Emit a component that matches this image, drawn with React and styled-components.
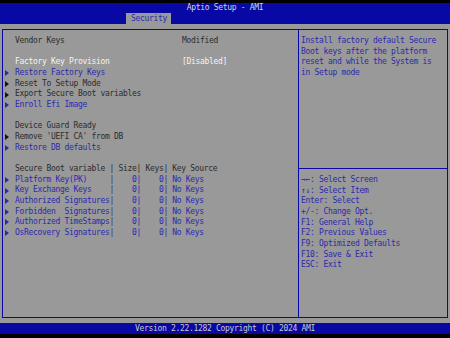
import React from 'react'
import styled, { createGlobalStyle } from 'styled-components'

const blue = '#0808a4'
const gray = '#999999'

const GlobalStyle = createGlobalStyle`
    html, body {
        margin: 0;
        padding: 0;
        background: #000;
    }
    body {
        font-family: "DejaVu Sans Mono", "Liberation Mono", monospace;
    }
`

const ink = {
    dark: '#2c2c2c',
    white: '#f4f4f4',
    blue: '#2a2aae',
}

const rows = [
    { label: 'Vendor Keys', value: 'Modified', tone: 'dark' },
    { blank: true },
    { label: 'Factory Key Provision', value: '[Disabled]', tone: 'white' },
    { label: 'Restore Factory Keys', tone: 'blue', arrow: true },
    { label: 'Reset To Setup Mode', tone: 'dark', arrow: true },
    { label: 'Export Secure Boot variables', tone: 'dark', arrow: true },
    { label: 'Enroll Efi Image', tone: 'blue', arrow: true },
    { blank: true },
    { label: 'Device Guard Ready', tone: 'dark' },
    { label: "Remove 'UEFI CA' from DB", tone: 'dark', arrow: true },
    { label: 'Restore DB defaults', tone: 'blue', arrow: true },
    { blank: true },
    { label: 'Secure Boot variable | Size| Keys| Key Source', tone: 'dark', wide: true },
    { label: 'Platform Key(PK)     |    0|    0| No Keys', tone: 'blue', arrow: true, wide: true },
    { label: 'Key Exchange Keys    |    0|    0| No Keys', tone: 'blue', arrow: true, wide: true },
    { label: 'Authorized Signatures|    0|    0| No Keys', tone: 'blue', arrow: true, wide: true },
    { label: 'Forbidden  Signatures|    0|    0| No Keys', tone: 'blue', arrow: true, wide: true },
    { label: 'Authorized TimeStamps|    0|    0| No Keys', tone: 'blue', arrow: true, wide: true },
    { label: 'OsRecovery Signatures|    0|    0| No Keys', tone: 'blue', arrow: true, wide: true },
]

const helpLines = [
    'Install factory default Secure',
    'Boot keys after the platform',
    'reset and while the System is',
    'in Setup mode',
]

const keyLines = [
    '→←: Select Screen',
    '↑↓: Select Item',
    'Enter: Select',
    '+/-: Change Opt.',
    'F1: General Help',
    'F2: Previous Values',
    'F9: Optimized Defaults',
    'F10: Save & Exit',
    'ESC: Exit',
]

export default function App() {
    return (
        <>
            <GlobalStyle />
            <Screen>
                <TitleBar>
                    <Title>Aptio Setup - AMI</Title>
                    <Tabs>
                        <Tab>Security</Tab>
                    </Tabs>
                </TitleBar>
                <Body>
                    <Frame>
                        <MainPanel>
                            {rows.map((r, i) =>
                                r.blank ? (
                                    <Row key={i} />
                                ) : (
                                    <Row key={i}>
                                        <MarkerSlot>{r.arrow && <Marker tone={r.tone} />}</MarkerSlot>
                                        <Label tone={r.tone} wide={r.wide}>{r.label}</Label>
                                        {r.value && <Value tone={r.tone}>{r.value}</Value>}
                                    </Row>
                                )
                            )}
                        </MainPanel>
                        <SidePanel>
                            <HelpBox>
                                {helpLines.map((l) => (
                                    <Line key={l}>{l}</Line>
                                ))}
                            </HelpBox>
                            <KeyBox>
                                {keyLines.map((l) => (
                                    <Line key={l}>{l}</Line>
                                ))}
                            </KeyBox>
                        </SidePanel>
                    </Frame>
                </Body>
                <Footer>Version 2.22.1282 Copyright (C) 2024 AMI</Footer>
            </Screen>
        </>
    )
}

const Screen = styled.div`
    width: 450px;
    height: 338px;
    box-sizing: border-box;
    padding: 3px 0 4px;
    background: #000;
    display: flex;
    flex-direction: column;
    font-size: 8px;
    letter-spacing: -0.32px;
    overflow: hidden;
`

const TitleBar = styled.div`
    height: 21px;
    background: ${blue};
    display: flex;
    flex-direction: column;
`

const Title = styled.div`
    height: 10px;
    line-height: 10px;
    text-align: center;
    color: #d4d4d4;
`

const Tabs = styled.div`
    margin-top: auto;
    display: flex;
    padding-left: 126px;
`

const Tab = styled.div`
    height: 11px;
    line-height: 11px;
    padding: 0 4px 0 5px;
    background: ${gray};
    color: ${ink.blue};
`

const Body = styled.div`
    flex: 1;
    background: ${gray};
    padding: 5px 2px;
    display: flex;
`

const Frame = styled.div`
    flex: 1;
    border: 1px solid ${blue};
    display: grid;
    grid-template-columns: 296px 1fr;
`

const MainPanel = styled.div`
    border-right: 1px solid ${blue};
    padding-top: 6px;
`

const Row = styled.div`
    height: 10.66px;
    line-height: 10.66px;
    display: flex;
    align-items: center;
    white-space: pre;
`

const MarkerSlot = styled.div`
    width: 10px;
    padding-left: 2px;
    display: flex;
    align-items: center;
`

const Marker = styled.span`
    width: 0;
    height: 0;
    border-left: 4px solid ${({ tone }) => (tone === 'blue' ? ink.blue : '#151515')};
    border-top: 3px solid transparent;
    border-bottom: 3px solid transparent;
`

const Label = styled.span`
    width: ${({ wide }) => (wide ? 'auto' : '167px')};
    color: ${({ tone }) => ink[tone]};
`

const Value = styled.span`
    color: ${({ tone }) => ink[tone]};
`

const SidePanel = styled.div`
    display: flex;
    flex-direction: column;
`

const HelpBox = styled.div`
    height: 132px;
    padding: 6px 0 0 2px;
    border-bottom: 1px solid ${blue};
    color: ${ink.blue};
`

const KeyBox = styled.div`
    padding: 6px 0 0 2px;
    color: ${ink.blue};
`

const Line = styled.div`
    height: 10.66px;
    line-height: 10.66px;
    white-space: pre;
`

const Footer = styled.div`
    height: 11px;
    line-height: 11px;
    background: ${blue};
    color: #c8c8c8;
    text-align: center;
`
